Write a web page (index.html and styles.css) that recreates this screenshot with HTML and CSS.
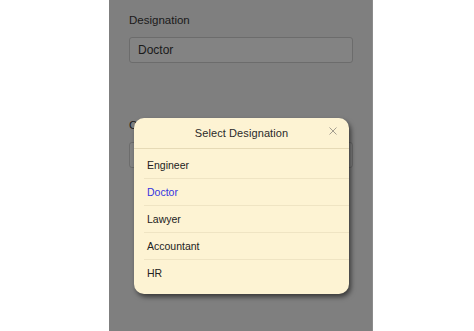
FILE: index.html
```html
<!DOCTYPE html>
<html>
<head>
<meta charset="utf-8">
<link rel="stylesheet" href="styles.css">
</head>
<body>
<div class="screen">
  <div class="field">
    <div class="label">Designation</div>
    <div class="input">Doctor</div>
  </div>
  <div class="field field-second">
    <div class="label">Company</div>
    <div class="input input-second"></div>
  </div>

  <div class="popup">
    <div class="popup-header">
      <span class="popup-title">Select Designation</span>
      <svg class="close" width="8" height="8" viewBox="0 0 8 8"><path d="M0.5 0.5 L7.5 7.5 M7.5 0.5 L0.5 7.5" stroke="#9a9488" stroke-width="0.9" fill="none"/></svg>
    </div>
    <ul class="options">
      <li class="option">Engineer</li>
      <li class="option selected">Doctor</li>
      <li class="option">Lawyer</li>
      <li class="option">Accountant</li>
      <li class="option">HR</li>
    </ul>
  </div>
</div>
</body>
</html>
```

FILE: styles.css
```css
html, body {
  margin: 0;
  padding: 0;
  background: #ffffff;
}

body {
  font-family: "Liberation Sans", Arial, Helvetica, sans-serif;
}

.screen {
  position: relative;
  margin-left: 109px;
  width: 264px;
  height: 331px;
  background: #7f7f7f;
  box-sizing: border-box;
  padding: 13px 20px 0 20px;
  border-right: 1px solid #8c8c8c;
}

.field {
  display: flex;
  flex-direction: column;
}

.label {
  font-size: 11.5px;
  color: #1a1a1a;
  line-height: 14px;
}

.input {
  margin-top: 10px;
  height: 26px;
  box-sizing: border-box;
  width: 224px;
  border: 1px solid #6c6c6c;
  border-radius: 3px;
  background: #838383;
  padding-left: 8px;
  font-size: 12px;
  line-height: 24px;
  color: #1a1a1a;
}

.field-second {
  margin-top: 55px;
}

.input-second {
  margin-top: 10px;
}

.popup {
  position: absolute;
  left: 25px;
  top: 118px;
  width: 215px;
  height: 176px;
  background: #fdf3d3;
  border-radius: 10px;
  box-shadow: 2px 3px 5px rgba(0, 0, 0, 0.55);
  overflow: hidden;
}

.popup-header {
  position: relative;
  height: 30px;
  border-bottom: 1px solid #e6dab6;
  display: flex;
  align-items: center;
  justify-content: center;
}

.popup-title {
  font-size: 11px;
  color: #2a2a2a;
  letter-spacing: 0.1px;
}

.close {
  position: absolute;
  right: 12px;
  top: 9px;
}

.options {
  list-style: none;
  margin: 0 0 0 10px;
  padding: 3px 0 0 0;
}

.option {
  height: 26px;
  line-height: 26px;
  padding-left: 3px;
  font-size: 10.5px;
  color: #222222;
  border-bottom: 1px solid #efe4c3;
}

.option:last-child {
  border-bottom: none;
}

.option.selected {
  color: #3434e0;
}
```
